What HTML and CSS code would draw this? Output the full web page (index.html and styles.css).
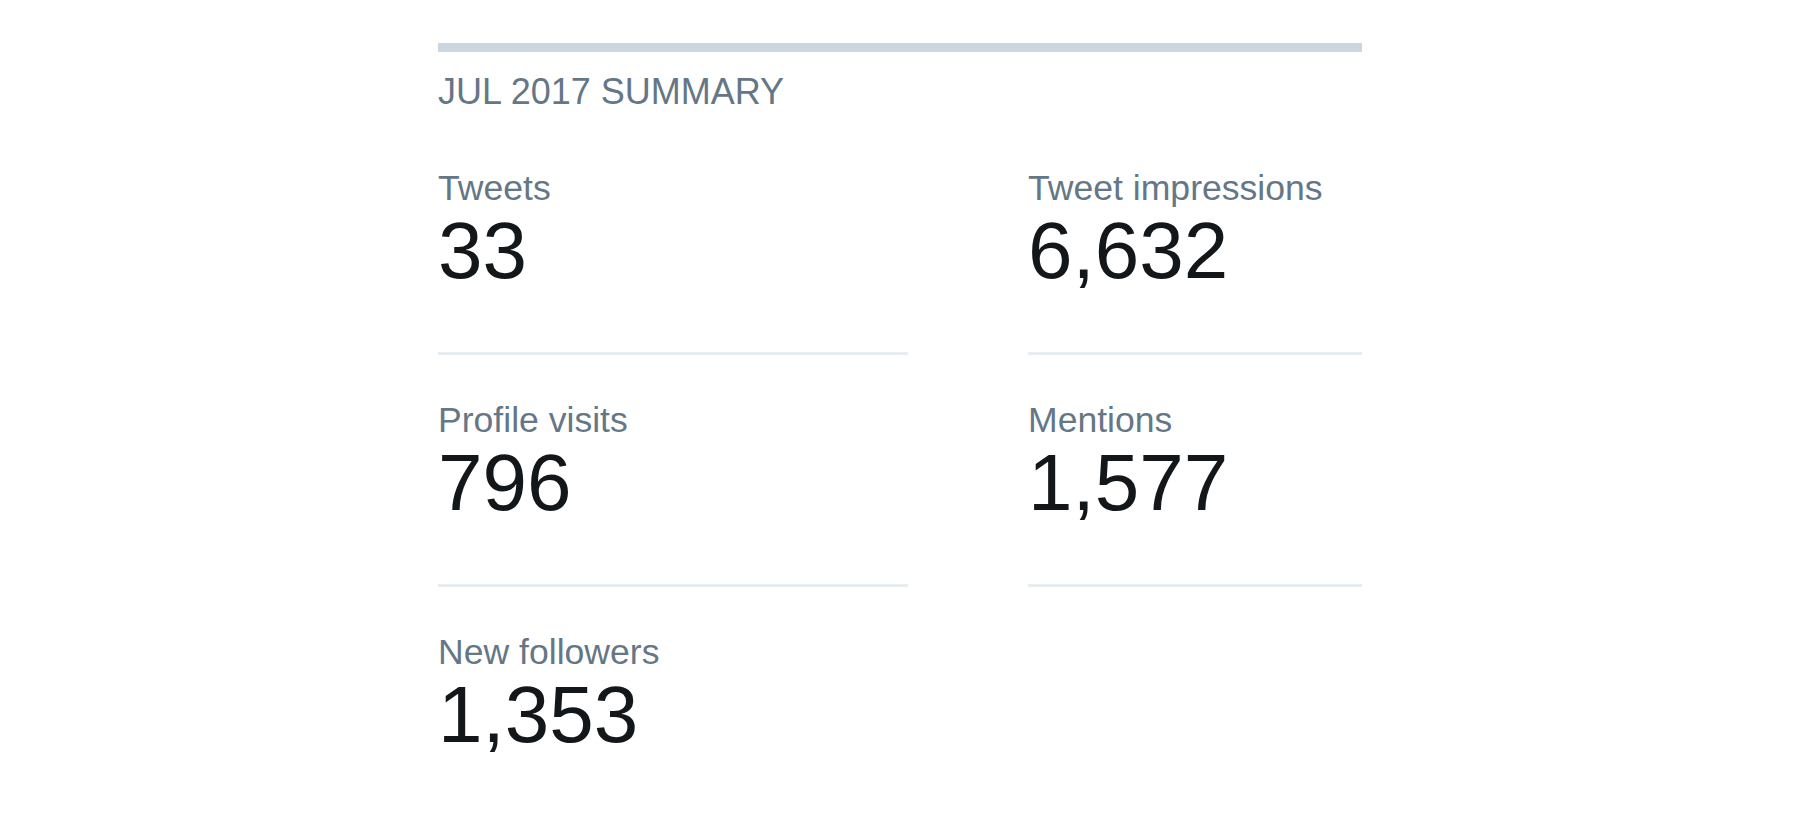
FILE: index.html
```html
<!DOCTYPE html>
<html lang="en">
<head>
<meta charset="utf-8">
<title>Jul 2017 Summary</title>
<link rel="stylesheet" href="styles.css">
</head>
<body>
<section class="summary">
  <h2 class="summary-title">JUL 2017 SUMMARY</h2>
  <div class="stats">
    <div class="stat">
      <div class="stat-label">Tweets</div>
      <div class="stat-value">33</div>
    </div>
    <div class="stat">
      <div class="stat-label">Tweet impressions</div>
      <div class="stat-value">6,632</div>
    </div>
    <div class="stat">
      <div class="stat-label">Profile visits</div>
      <div class="stat-value">796</div>
    </div>
    <div class="stat">
      <div class="stat-label">Mentions</div>
      <div class="stat-value">1,577</div>
    </div>
    <div class="stat stat-last">
      <div class="stat-label">New followers</div>
      <div class="stat-value">1,353</div>
    </div>
  </div>
</section>
</body>
</html>
```
FILE: styles.css
```css
html, body {
  margin: 0;
  padding: 0;
  background: #ffffff;
}

body {
  font-family: "Liberation Sans", Arial, sans-serif;
  overflow: hidden;
}

.summary {
  width: 924px;
  margin: 43px 0 0 438px;
  border-top: 9px solid #ccd6dd;
}

.summary-title {
  margin: 18px 0 0;
  font-size: 36px;
  line-height: 44px;
  font-weight: 400;
  color: #657786;
}

.stats {
  display: grid;
  grid-template-columns: 470px 334px;
  column-gap: 120px;
  margin-top: 9px;
}

.stat {
  padding: 43px 0 60px;
  border-bottom: 3px solid #e6ecf0;
}

.stat-last {
  border-bottom: none;
}

.stat-label {
  font-size: 35.6px;
  line-height: 44px;
  color: #657786;
}

.stat-value {
  font-size: 80px;
  line-height: 82px;
  color: #14171a;
}
```
